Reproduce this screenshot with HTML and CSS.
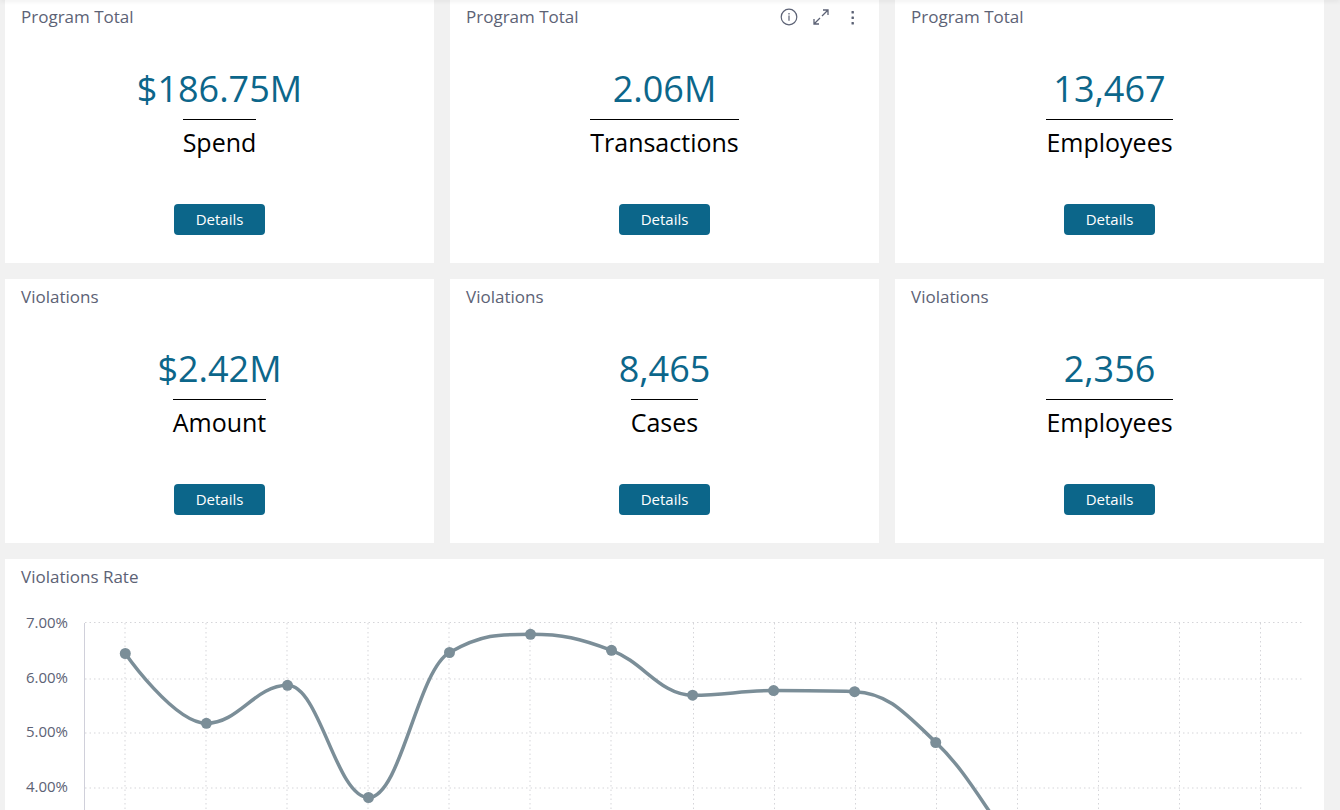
FILE: index.html
```html
<!DOCTYPE html>
<html lang="en">

<head>
    <meta charset="UTF-8">
    <meta name="viewport" content="width=device-width, initial-scale=1.0">
    <title>Program Dashboard</title>
    <link rel="stylesheet" href="styles.css">
</head>

<body>
    <div class="topbar"></div>

    <main class="dashboard">
        <section class="card">
            <header class="card-header">
                <h2>Program Total</h2>
            </header>
            <div class="metric">
                <div class="value">$186.75M</div>
                <div class="label">Spend</div>
            </div>
            <button type="button" class="details">Details</button>
        </section>

        <section class="card">
            <header class="card-header">
                <h2>Program Total</h2>
                <div class="tools">
                    <button type="button" aria-label="Info">
                        <svg width="18" height="18" viewBox="0 0 18 18" fill="none" stroke="currentColor">
                            <circle cx="9" cy="9" r="7.8" stroke-width="1.2" />
                            <path d="M9 7.6v5.2" stroke-width="1.2" />
                            <path d="M9 5v1.4" stroke-width="1.2" />
                        </svg>
                    </button>
                    <button type="button" aria-label="Expand">
                        <svg width="18" height="18" viewBox="0 0 18 18" fill="none" stroke="currentColor" stroke-width="1.3">
                            <path d="M11 2H16v5M16 2l-6 6M7 16H2v-5M2 16l6-6" />
                        </svg>
                    </button>
                    <button type="button" aria-label="More">
                        <svg width="18" height="18" viewBox="0 0 18 18" fill="currentColor">
                            <rect x="7.5" y="3" width="2.4" height="2.4" rx="0.5" />
                            <rect x="7.5" y="8.5" width="2.4" height="2.4" rx="0.5" />
                            <rect x="7.5" y="14" width="2.4" height="2.4" rx="0.5" />
                        </svg>
                    </button>
                </div>
            </header>
            <div class="metric">
                <div class="value">2.06M</div>
                <div class="label">Transactions</div>
            </div>
            <button type="button" class="details">Details</button>
        </section>

        <section class="card">
            <header class="card-header">
                <h2>Program Total</h2>
            </header>
            <div class="metric">
                <div class="value">13,467</div>
                <div class="label">Employees</div>
            </div>
            <button type="button" class="details">Details</button>
        </section>

        <section class="card">
            <header class="card-header">
                <h2>Violations</h2>
            </header>
            <div class="metric">
                <div class="value">$2.42M</div>
                <div class="label">Amount</div>
            </div>
            <button type="button" class="details">Details</button>
        </section>

        <section class="card">
            <header class="card-header">
                <h2>Violations</h2>
            </header>
            <div class="metric">
                <div class="value">8,465</div>
                <div class="label">Cases</div>
            </div>
            <button type="button" class="details">Details</button>
        </section>

        <section class="card">
            <header class="card-header">
                <h2>Violations</h2>
            </header>
            <div class="metric">
                <div class="value">2,356</div>
                <div class="label">Employees</div>
            </div>
            <button type="button" class="details">Details</button>
        </section>

        <section class="card wide">
            <header class="card-header">
                <h2>Violations Rate</h2>
            </header>
            <svg class="chart" viewBox="0 0 1319 211" role="img" aria-label="Violations Rate">
                <g class="grid">
                    <path d="M80 23.5H1298M80 80H1298M80 134H1298M80 189H1298" />
                    <path d="M120 24V211M201 24V211M282 24V211M363 24V211M444 24V211M525 24V211M606 24V211M688.5 24V211M769.5 24V211M850.5 24V211M931.5 24V211M1012.5 24V211M1093.5 24V211M1174.5 24V211M1255.5 24V211" />
                </g>
                <path class="axis" d="M79.5 24V211" />
                <g class="ticks">
                    <text x="63" y="29">7.00%</text>
                    <text x="63" y="84">6.00%</text>
                    <text x="63" y="138">5.00%</text>
                    <text x="63" y="193">4.00%</text>
                </g>
                <path class="line" d="M120.3 54.5C120.3 54.5 169 124.3 201.4 124.3C233.8 124.3 250 86.3 282.5 86.3C314.9 86.3 331 198.5 363.5 198.5C395.9 198.5 412.1 71.7 444.5 53.5C476.9 35.3 493.1 35.3 525.5 35.3C557.9 35.3 574.1 39.1 606.5 51.3C638.9 63.5 655.2 96.2 687.6 96.2C720 96.2 736.2 91.6 768.6 91.6C801 91.6 817.2 91.6 849.6 92.7C882 93.8 898.6 112.5 931 143.5C963.4 174.5 980 210 1012 251" />
                <g class="points">
                    <circle cx="120.3" cy="54.5" r="5.5" />
                    <circle cx="201.4" cy="124.3" r="5.5" />
                    <circle cx="282.5" cy="86.3" r="5.5" />
                    <circle cx="363.5" cy="198.5" r="5.5" />
                    <circle cx="444.5" cy="53.5" r="5.5" />
                    <circle cx="525.5" cy="35.3" r="5.5" />
                    <circle cx="606.5" cy="51.3" r="5.5" />
                    <circle cx="687.6" cy="96.2" r="5.5" />
                    <circle cx="768.6" cy="91.6" r="5.5" />
                    <circle cx="849.6" cy="92.7" r="5.5" />
                    <circle cx="930.7" cy="143.5" r="5.5" />
                </g>
            </svg>
        </section>
    </main>
</body>

</html>
```
FILE: styles.css
```css
* {
    box-sizing: border-box;
}

body {
    margin: 0;
    background-color: #f1f1f1;
    font-family: "Open Sans", sans-serif;
}

.topbar {
    position: relative;
    height: 1px;
    margin-top: -1px;
    box-shadow: 0 0 5px rgba(0, 0, 0, 0.25);
}

.dashboard {
    display: grid;
    grid-template-columns: repeat(3, 1fr);
    gap: 16px;
    margin-top: -1px;
    padding: 0 16px 0 5px;
}

.card {
    display: flex;
    flex-direction: column;
    align-items: center;
    padding-bottom: 28px;
    background-color: #fff;
}

.wide {
    grid-column: 1 / -1;
    padding-bottom: 0;
}

.card-header {
    display: flex;
    justify-content: space-between;
    align-items: center;
    width: 100%;
    height: 36px;
    padding: 0 17px 0 16px;
    color: #5c6275;
}

h2 {
    margin: 0;
    padding-bottom: 2px;
    font-size: 17px;
    font-weight: 400;
}

.tools {
    display: flex;
    gap: 14px;
}

.tools button {
    display: flex;
    padding: 0;
    border: none;
    background: none;
    color: #5c6275;
    cursor: pointer;
}

.metric {
    display: flex;
    flex-direction: column;
    align-items: center;
    padding-top: 24px;
}

.value {
    line-height: 60px;
    font-size: 36px;
    color: #0c668a;
}

.label {
    border-top: 1px solid #000;
    line-height: 44px;
    font-size: 25px;
    color: #000;
}

.details {
    margin-top: 40px;
    padding: 0 22px;
    border: none;
    border-radius: 4px;
    background-color: #0c668a;
    color: #fff;
    font-family: inherit;
    font-size: 15px;
    line-height: 31px;
    cursor: pointer;
}

.chart {
    display: block;
    width: 100%;
    margin-top: 4px;
}

.grid path {
    fill: none;
    stroke: #d5d5d9;
    stroke-width: 1;
    stroke-dasharray: 1.5 3;
}

.axis {
    stroke: #d0d0da;
}

.ticks text {
    font-size: 15px;
    text-anchor: end;
    fill: #5c6275;
}

.line {
    fill: none;
    stroke: #7b8e98;
    stroke-width: 3.5;
}

.points circle {
    fill: #7b8e98;
}
```
